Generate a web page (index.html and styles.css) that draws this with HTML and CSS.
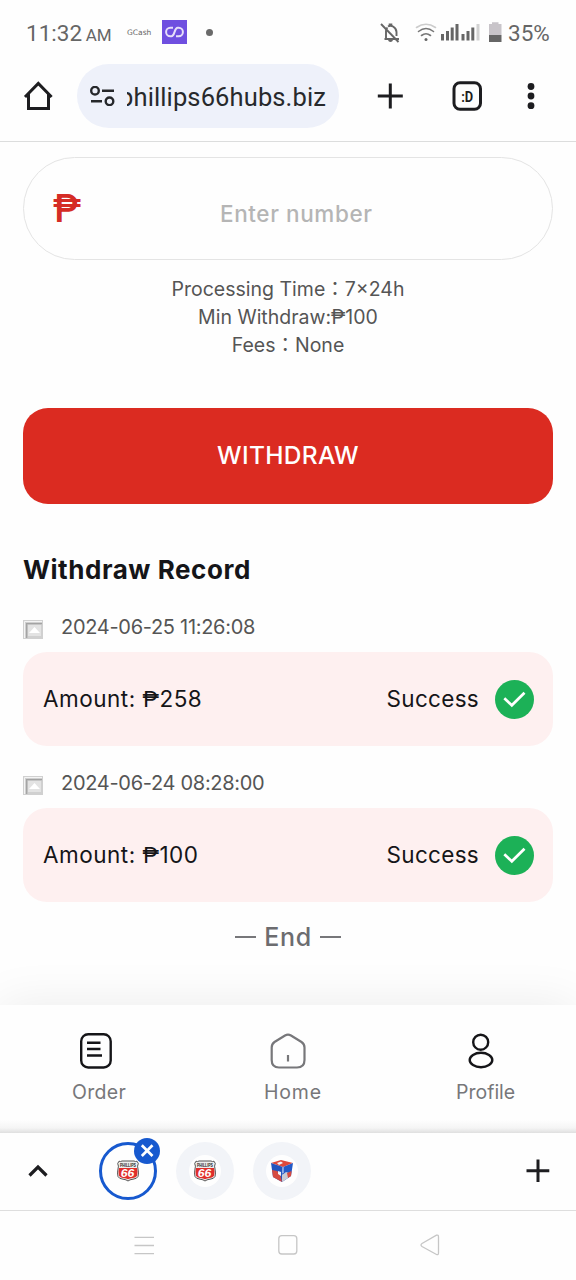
FILE: index.html
```html
<!DOCTYPE html>
<html lang="en">
<head>
<meta charset="utf-8">
<title>Withdraw</title>
<link rel="stylesheet" href="styles.css">
</head>
<body>
<header class="status">
  <span class="clock">11:32 <small>AM</small></span>
  <span class="gcash">GCash</span>
  <svg class="app" width="25" height="24" viewBox="0 0 25 24"><path d="M0 0H25V24H0Z" fill="#6f4fe0"/><path d="M11 7.800H8.300A4.200 4.200 0 0 0 8.300 16.200H9.500C13 16.200 12 7.800 15.700 7.800H16.700A4.200 4.200 0 0 1 16.700 16.200H14" fill="none" stroke="#e6def9" stroke-width="2"/></svg>
  <i class="dot"></i>
  <svg class="status-icons" width="125" height="24" viewBox="378 20 125 24">
    <g fill="none" stroke="#666" stroke-width="1.900">
      <path d="M384.500 39H399M386 39V31Q386 28.500 387.500 27.500M388 26.500Q390.500 25 393 26.500Q396.500 28.500 396.500 32V36"/>
      <path d="M381 24L398.500 42"/>
    </g>
    <path d="M388.700 26V23.500H392.300V26ZM388 40H393Q392.500 42 390.500 42Q388.500 42 388 40Z" fill="#666"/>
    <g fill="none" stroke-width="1.600" stroke-linecap="round">
      <path d="M416.500 27.500Q426 21 435.500 27.500" stroke="#ccc"/>
      <path d="M418.500 31.500Q426 25.500 433.500 31.500M421.500 35.500Q426 32 430.500 35.500" stroke="#777"/>
    </g>
    <circle cx="426" cy="39.600" r="1.500" fill="#666"/>
    <path d="M441 34H444V40.500H441ZM446 31H449V40.500H446ZM450.700 27.500H453.700V40.500H450.700ZM455.500 24H458.500V40.500H455.500ZM461.500 34H464.500V40.500H461.500ZM466.500 31H469.500V40.500H466.500ZM471.300 27.500H474.300V40.500H471.300Z" fill="#666"/>
    <path d="M476.500 24H479.500V40.500H476.500Z" fill="#d2d2d2"/>
    <path d="M489 24H492V22.300H498.500V24H501.500V35H489Z" fill="#c8c4c9"/>
    <path d="M489 35H501.500V42H489Z" fill="#666"/>
  </svg>
  <span class="battery">35%</span>
</header>

<div class="toolbar">
  <svg class="home" width="30" height="32" viewBox="23 80 30 32"><path d="M25 97L38.300 83.500L51.600 97M28.500 94V108.500H48.500V94" fill="none" stroke="#1d1d20" stroke-width="3"/></svg>
  <div class="address">
    <svg width="25" height="20" viewBox="90 86 25 20" fill="none" stroke="#26282b" stroke-width="2.400"><circle cx="95" cy="90.700" r="3.800"/><path d="M102 90.700H114M91 101.300H102"/><circle cx="109.500" cy="101.300" r="3.800"/></svg>
    <div class="url"><span>phillips66hubs.biz</span></div>
  </div>
  <svg class="actions" width="170" height="32" viewBox="376 80 170 32">
    <path d="M390.300 83.500V108.500M377.800 96H402.800" stroke="#1d1d20" stroke-width="3"/>
    <rect x="454" y="82.800" width="26.500" height="26.500" rx="6" fill="none" stroke="#1d1d20" stroke-width="3"/>
    <text x="467.200" y="101.500" class="tab-count" textLength="12" lengthAdjust="spacingAndGlyphs">:D</text>
    <g fill="#1d1d20"><circle cx="531" cy="86.500" r="3.400"/><circle cx="531" cy="96" r="3.400"/><circle cx="531" cy="105.700" r="3.400"/></g>
  </svg>
</div>

<main>
  <div class="field"><span class="peso">₱</span><span class="placeholder">Enter number</span></div>
  <div class="info">
    <p>Processing Time：7×24h</p>
    <p>Min Withdraw:<span class="sign">₱</span>100</p>
    <p>Fees：None</p>
  </div>
  <button class="withdraw">WITHDRAW</button>
  <h2>Withdraw Record</h2>
  <div class="date">
    <svg width="20" height="19" viewBox="0 0 20 19"><path d="M0 0H20V19H0Z" fill="#d0d0d0"/><path d="M1.500 18V1.500H19" fill="none" stroke="#f4f4f4"/><path d="M3.700 18V3.700H19" fill="none" stroke="#a3a3a3" stroke-width="1.300"/><path d="M5 5H18V16H5Z" fill="#e3e3e3"/><path d="M6 13L11.500 7L17 13Z" fill="#fff"/></svg>
    <span>2024-06-25 11:26:08</span>
  </div>
  <div class="card">
    <span class="amount">Amount: <span class="sign">₱</span>258</span><span class="success">Success</span>
    <svg width="39" height="39" viewBox="0 0 39 39"><circle cx="19.500" cy="19.500" r="19.500" fill="#1cb157"/><path d="M9.300 18.300L16.800 25.300L29.500 12.700" fill="none" stroke="#fff" stroke-width="2.700"/></svg>
  </div>
  <div class="date second">
    <svg width="20" height="19" viewBox="0 0 20 19"><path d="M0 0H20V19H0Z" fill="#d0d0d0"/><path d="M1.500 18V1.500H19" fill="none" stroke="#f4f4f4"/><path d="M3.700 18V3.700H19" fill="none" stroke="#a3a3a3" stroke-width="1.300"/><path d="M5 5H18V16H5Z" fill="#e3e3e3"/><path d="M6 13L11.500 7L17 13Z" fill="#fff"/></svg>
    <span>2024-06-24 08:28:00</span>
  </div>
  <div class="card">
    <span class="amount">Amount: <span class="sign">₱</span>100</span><span class="success">Success</span>
    <svg width="39" height="39" viewBox="0 0 39 39"><circle cx="19.500" cy="19.500" r="19.500" fill="#1cb157"/><path d="M9.300 18.300L16.800 25.300L29.500 12.700" fill="none" stroke="#fff" stroke-width="2.700"/></svg>
  </div>
  <div class="end"><i></i><span>End</span><i></i></div>
</main>

<nav class="tabs">
  <div class="tab order">
    <svg width="36" height="38" viewBox="78 1032 36 38" fill="none" stroke="#151518" stroke-width="2.400"><rect x="81.200" y="1034.200" width="29.500" height="33.300" rx="7"/><path d="M87 1042.700H100.500M87 1049H100.500M87 1055.500H102"/></svg>
    <span>Order</span>
  </div>
  <div class="tab house">
    <svg width="38" height="38" viewBox="269 1032 38 38" fill="none" stroke="#77777a" stroke-width="2.200"><path d="M285 1035.500Q288 1033.800 291 1035.500L301.500 1042Q304.500 1044 304.500 1047.500V1060Q304.500 1067.500 297 1067.500H279Q271.700 1067.500 271.700 1060V1047.500Q271.700 1044 274.500 1042Z"/><path d="M288 1055V1061.500"/></svg>
    <span>Home</span>
  </div>
  <div class="tab profile">
    <svg width="30" height="38" viewBox="466 1032 30 38" fill="none" stroke="#151518" stroke-width="2.400"><circle cx="480.700" cy="1042.200" r="7.500"/><ellipse cx="481" cy="1060" rx="11.300" ry="7.200"/></svg>
    <span>Profile</span>
  </div>
</nav>

<section class="strip">
  <svg class="chevron" width="20" height="14" viewBox="0 0 20 14"><path d="M1.500 11.500L10 3L18.500 11.500" fill="none" stroke="#1d1d20" stroke-width="3.200"/></svg>
  <div class="site active">
    <svg width="22" height="22" viewBox="0 0 22 22">
      <path d="M2 1.200Q3.500 2 5 1H17Q18.500 2 20 1.200L21.300 3.500Q20 6 21 9Q22 13 21 16.500Q20 18.800 16 19.200Q12.500 19.600 11 21Q9.500 19.600 6 19.200Q2 18.800 1 16.500Q0 13 1 9Q2 6 .700 3.500Z" fill="#eee" stroke="#555"/>
      <path d="M2 8H20Q21 12 20 15.800Q19 17.600 16 17.900Q12.500 18.300 11 19.300Q9.500 18.300 6 17.900Q3 17.600 2 15.800Q1 12 2 8Z" fill="#e02f2b"/>
      <text x="11" y="6.500" class="shield-name" textLength="16" lengthAdjust="spacingAndGlyphs">PHILLIPS</text>
      <text x="10.500" y="16.500" class="shield-num" textLength="13.500" lengthAdjust="spacingAndGlyphs">66</text>
    </svg>
    <svg class="close" width="26" height="26" viewBox="0 0 26 26"><circle cx="13" cy="13" r="13" fill="#1759cf"/><path d="M7.800 7.300L18.500 18M18.500 7.300L7.800 18" stroke="#fff" stroke-width="2.700"/></svg>
  </div>
  <div class="site"><b>
    <svg width="22" height="22" viewBox="0 0 22 22">
      <path d="M2 1.200Q3.500 2 5 1H17Q18.500 2 20 1.200L21.300 3.500Q20 6 21 9Q22 13 21 16.500Q20 18.800 16 19.200Q12.500 19.600 11 21Q9.500 19.600 6 19.200Q2 18.800 1 16.500Q0 13 1 9Q2 6 .700 3.500Z" fill="#eee" stroke="#555"/>
      <path d="M2 8H20Q21 12 20 15.800Q19 17.600 16 17.900Q12.500 18.300 11 19.300Q9.500 18.300 6 17.900Q3 17.600 2 15.800Q1 12 2 8Z" fill="#e02f2b"/>
      <text x="11" y="6.500" class="shield-name" textLength="16" lengthAdjust="spacingAndGlyphs">PHILLIPS</text>
      <text x="10.500" y="16.500" class="shield-num" textLength="13.500" lengthAdjust="spacingAndGlyphs">66</text>
    </svg></b></div>
  <div class="site"><b>
    <svg width="22" height="22" viewBox="0 0 22 22"><path d="M0 3L10 0L22 3L12 7Z" fill="#df493b"/><path d="M0 3L12 7L11 22L2 17Z" fill="#2455bd"/><path d="M12 7L22 3L20 16L11 22Z" fill="#235ac7"/><path d="M1 10L6 11L9 14L11 22L2 17Z" fill="#d64a40"/><path d="M11 15L15 12L18 13L17 18L11 22Z" fill="#c9cbd4"/><path d="M16 13L20.600 11L20 16L17 18Z" fill="#d64a40"/><path d="M6 3L10 1.500L12 3L8 5ZM7 11L10 12V16L7 14Z" fill="#f3f3f8"/><path d="M12 7V13" stroke="#d8e4ff"/></svg></b></div>
  <svg class="plus" width="24" height="24" viewBox="0 0 24 24"><path d="M12 .500V23M.500 11.800H23.300" stroke="#1d1d20" stroke-width="3"/></svg>
</section>

<footer class="system">
  <svg width="290" height="24" viewBox="132 1233 290 24" fill="none" stroke="#c6c6c6" stroke-width="1.300"><path d="M134.500 1237.300H154M134.500 1245.500H154M134.500 1253.700H154"/><rect x="278.800" y="1235.700" width="18" height="18.300" rx="3"/></svg>
  <svg width="22" height="24" viewBox="0 0 22 24"><path d="M17.500 2.200Q19.500 1.500 19.500 4V20Q19.500 22.300 17.500 21.500L3 13.500Q1 12 3 10.500Z" fill="none" stroke="#c6c6c6" stroke-width="1.300"/></svg>
</footer>
</body>
</html>
```

FILE: styles.css
```css
* { box-sizing: border-box; }
body {
  margin: 0;
  width: 576px;
  height: 1280px;
  display: flex;
  flex-direction: column;
  overflow: hidden;
  background: #fefefe;
  font-family: Inter, "Noto Sans CJK TC", sans-serif;
  color: #151518;
}
svg { display: block; flex: none; }
p, h2 { margin: 0; }
span { white-space: nowrap; }
.sign { font-family: Roboto, sans-serif; }

.status {
  height: 64px;
  flex: none;
  display: flex;
  align-items: center;
  padding: 0 0 0 26px;
  font-family: Roboto, sans-serif;
  font-size: 22.5px;
  color: #666;
}
.clock { width: 101px; padding-top: 2px; }
.clock small { font-size: 17px; margin-left: -2px; }
.gcash { width: 35px; font: 7.5px "DejaVu Sans", sans-serif; }
.dot { width: 7px; height: 7px; border-radius: 50%; background: #6a6a6a; margin-left: 19px; }
.status-icons { margin-left: 165px; }
.battery { margin-left: 5px; padding-top: 2px; }

.toolbar {
  height: 78px;
  flex: none;
  display: flex;
  align-items: flex-start;
  padding-left: 23px;
  border-bottom: 1px solid #dcdddd;
}
.home { margin-top: 16px; }
.address {
  width: 262px;
  height: 64px;
  margin-left: 24px;
  border-radius: 32px;
  background: #eef1fa;
  display: flex;
  align-items: center;
  padding-left: 13px;
}
.url {
  width: 199px;
  margin-left: 12px;
  padding-top: 1px;
  overflow: hidden;
  display: flex;
  justify-content: flex-end;
  font: 25.5px/36px Roboto, sans-serif;
  letter-spacing: .12px;
  color: #27292c;
}
.actions { margin: 16px 0 0 37px; }
.tab-count { font: bold 15px Roboto, sans-serif; text-anchor: middle; fill: #1d1d20; }

main {
  height: 863px;
  flex: none;
  padding: 15px 23px 0;
}
.field {
  height: 103px;
  border: 1.5px solid #e4e4e4;
  border-radius: 52px;
  display: flex;
  align-items: center;
  padding-left: 29px;
}
.peso {
  width: 167px;
  font: 500 38px/40px Roboto, sans-serif;
  color: #d52c25;
}
.placeholder { font-size: 22.5px; font-weight: 500; letter-spacing: .6px; color: #b5b5b5; padding-top: 9px; }
.info { margin-top: 15px; font-size: 19.5px; line-height: 28px; text-align: center; color: #555; }
.info p { height: 28px; }
.withdraw {
  display: block;
  width: 530px;
  height: 96px;
  margin: 49px 0 0;
  padding-bottom: 3px;
  border: 0;
  border-radius: 25px;
  background: #db2b21;
  color: #fff;
  font: 500 24.5px Inter, sans-serif;
  letter-spacing: .3px;
}
h2 { margin-top: 50px; font-size: 26px; line-height: 32px; font-weight: 700; letter-spacing: .55px; }
.date { display: flex; align-items: center; gap: 18px; height: 30px; margin-top: 26px; font-size: 20px; letter-spacing: -.3px; color: #555; }
.date svg { margin-top: 4px; }
.date.second { margin-top: 22px; }
.card {
  height: 94px;
  margin-top: 10px;
  padding: 0 19px 0 20px;
  border-radius: 24px;
  background: #fef0f0;
  display: flex;
  align-items: center;
  font-size: 22.5px;
}
.amount, .success { margin-bottom: 2px; }
.amount { letter-spacing: .5px; }
.success { margin-left: auto; margin-right: 16px; letter-spacing: .3px; }
.end { display: flex; align-items: center; justify-content: center; gap: 8px; height: 30px; margin-top: 20px; font-size: 25px; font-weight: 500; letter-spacing: .6px; color: #6c6c6f; }
.end i { width: 21px; height: 2px; background: #77777a; }

.tabs {
  position: relative;
  height: 128px;
  flex: none;
  display: flex;
  background: linear-gradient(#fefefe 115px, #f5f5f5 123px, #dfdfdf 128px);
  box-shadow: 0 0 50px rgba(0, 0, 0, .08);
}
.tab { width: 192px; padding: 27px 0 0 72px; font-size: 19.5px; color: #77777a; }
.tab span { display: block; margin-top: 10px; line-height: 24px; }
.order span { letter-spacing: .3px; }
.order svg { margin-left: 6px; }
.house span { letter-spacing: .8px; }
.house svg { margin-left: 5px; }
.profile svg { margin-left: 10px; }

.strip {
  position: relative;
  height: 78px;
  flex: none;
  display: flex;
  align-items: center;
  padding: 0 0 1px 28px;
  background: #fefefe;
  border-bottom: 1.5px solid #dedede;
}
.site {
  position: relative;
  width: 58px;
  height: 58px;
  margin-right: 19px;
  border-radius: 50%;
  background: #f2f4f8;
  display: flex;
  align-items: center;
  justify-content: center;
}
.site b { width: 32px; height: 32px; border-radius: 50%; background: #fefefe; display: flex; align-items: center; justify-content: center; }
.site.active { margin-left: 51px; border: 3px solid #1759cf; background: #fefefe; }
.close { position: absolute; top: -7px; right: -6px; }
.plus { margin-left: 196px; }
.shield-name { font: bold 4.5px "Liberation Sans", sans-serif; text-anchor: middle; fill: #222; }
.shield-num { font: italic bold 10px "Liberation Sans", sans-serif; text-anchor: middle; fill: #fff; }

.system { height: 69px; flex: none; display: flex; align-items: center; padding: 0 0 2px 132px; background: #fefefe; }
.system svg + svg { margin-left: -3px; }
```
